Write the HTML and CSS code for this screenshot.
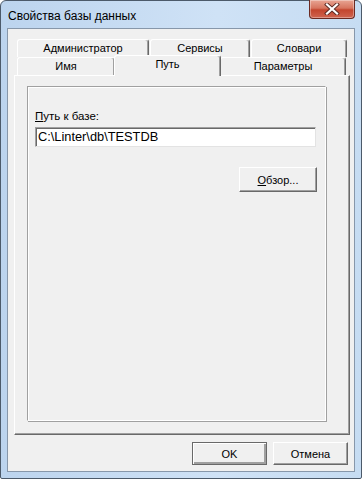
FILE: index.html
```html
<!DOCTYPE html>
<html lang="ru">
<head>
    <meta charset="UTF-8">
    <title>Свойства базы данных</title>
    <link rel="stylesheet" href="styles.css">
</head>
<body>
<div class="dlg">
    <div class="dlg-title">
        <span class="dlg-caption">Свойства базы данных</span>
        <div class="dlg-close">
            <svg width="16" height="12" viewBox="0 0 16 12">
                <path d="M3 1.5 L13 10.5 M13 1.5 L3 10.5" stroke="#5a2a24" stroke-width="4" stroke-linecap="square"/>
                <path d="M3 1.5 L13 10.5 M13 1.5 L3 10.5" stroke="#fff" stroke-width="2.2" stroke-linecap="square"/>
            </svg>
        </div>
    </div>
    <div class="dlg-client">
        <div class="tabs">
            <div class="tab-row">
                <div class="tab w-admin">Администратор</div>
                <div class="tab w-serv">Сервисы</div>
                <div class="tab w-dict">Словари</div>
            </div>
            <div class="tab-row">
                <div class="tab w-name">Имя</div>
                <div class="tab tab-on w-path">Путь</div>
                <div class="tab w-param">Параметры</div>
            </div>
        </div>
        <div class="tab-panel">
            <div class="group">
                <label class="lbl"><u>П</u>уть к базе:</label>
                <div class="edit">C:\Linter\db\TESTDB</div>
                <div class="group-btns">
                    <button class="btn btn-browse"><u>О</u>бзор...</button>
                </div>
            </div>
        </div>
        <div class="dlg-btns">
            <button class="btn btn-default">OK</button>
            <button class="btn">Отмена</button>
        </div>
    </div>
</div>
</body>
</html>
```

FILE: styles.css
```css
body {
    margin: 0;
    font-family: "Liberation Sans", Arial, sans-serif;
    font-size: 11px;
    color: #000;
}

.dlg {
    width: 362px;
    height: 479px;
    box-sizing: border-box;
    border: 1px solid #4c5a6a;
    border-radius: 6px 6px 2px 2px;
    background: linear-gradient(to right, #bcd4ee, #cfe2f6 60%, #c6dcf2);
    padding: 0 6px 6px 6px;
    display: flex;
    flex-direction: column;
}

.dlg-title {
    height: 27px;
    display: flex;
    justify-content: space-between;
    align-items: flex-start;
}

.dlg-caption {
    font-size: 12px;
    padding: 8px 0 0 1px;
    color: #000;
}

.dlg-close {
    width: 46px;
    height: 19px;
    box-sizing: border-box;
    margin-top: -1px;
    border: 1px solid #6b2a22;
    border-top: none;
    border-radius: 0 0 4px 4px;
    background: linear-gradient(to bottom, #e8a594, #d7755f 45%, #c3452e 55%, #cf6450);
    box-shadow: inset 0 0 0 1px rgba(255, 255, 255, .35);
    display: flex;
    justify-content: center;
    align-items: center;
}

.dlg-client {
    flex: 1;
    border: 1px solid #8797aa;
    background: #f0f0f0;
    padding: 10px 4px 0 6px;
    display: flex;
    flex-direction: column;
}

.tabs {
    padding: 0 3px;
}

.tab-row {
    display: flex;
    gap: 1px;
    height: 18px;
}

.tab {
    box-sizing: border-box;
    height: 18px;
    border: 1px solid;
    border-color: #fff #696969 transparent #fff;
    border-bottom: none;
    border-radius: 3px 3px 0 0;
    box-shadow: inset -1px 0 #a0a0a0;
    text-align: center;
    line-height: 17px;
    background: #f0f0f0;
}

.tab-on {
    position: relative;
    z-index: 1;
    height: 21px;
    margin: -2px -2px -1px -2px;
    line-height: 16px;
}

.w-admin { width: 132px; }
.w-serv { width: 100px; }
.w-dict { width: 96px; }
.w-name { width: 98px; }
.w-path { width: 107px; }
.w-param { width: 126px; }

.tab-panel {
    height: 360px;
    box-sizing: border-box;
    border: 1px solid;
    border-color: #fff #696969 #696969 #fff;
    box-shadow: inset -1px -1px #a0a0a0;
    padding: 10px 23px 13px 12px;
    display: flex;
}

.group {
    flex: 1;
    border: 1px solid #a0a0a0;
    border-right-color: #fff;
    border-bottom-color: #fff;
    box-shadow: inset 1px 1px #fff, 1px 1px #a0a0a0;
    padding: 23px 9px 0 7px;
    display: flex;
    flex-direction: column;
}

.lbl {
    font-size: 11.5px;
    line-height: 13px;
    height: 15px;
}

.edit {
    margin-top: 2px;
    height: 20px;
    box-sizing: border-box;
    border: 1px solid;
    border-color: #a0a0a0 #e3e3e3 #e3e3e3 #a0a0a0;
    box-shadow: inset 1px 1px #696969;
    background: #fff;
    padding: 1px 0 0 2px;
    line-height: 16px;
    font-size: 12.8px;
}

.group-btns {
    display: flex;
    justify-content: flex-end;
    margin-top: 20px;
    margin-right: -1px;
}

.btn {
    font-family: "Liberation Sans", Arial, sans-serif;
    font-size: 11px;
    color: #000;
    width: 75px;
    height: 23px;
    box-sizing: border-box;
    background: #f0f0f0;
    border: 1px solid;
    border-color: #fff #696969 #696969 #fff;
    box-shadow: inset -1px -1px #a0a0a0;
    padding: 0;
}

.btn-browse {
    width: 78px;
    height: 25px;
}

.btn-default {
    border-color: #696969;
    box-shadow: inset 1px 1px #fff, inset -2px -2px #a0a0a0;
}

.dlg-btns {
    display: flex;
    justify-content: flex-end;
    gap: 6px;
    margin-top: 7px;
    padding-right: 2px;
}
```
